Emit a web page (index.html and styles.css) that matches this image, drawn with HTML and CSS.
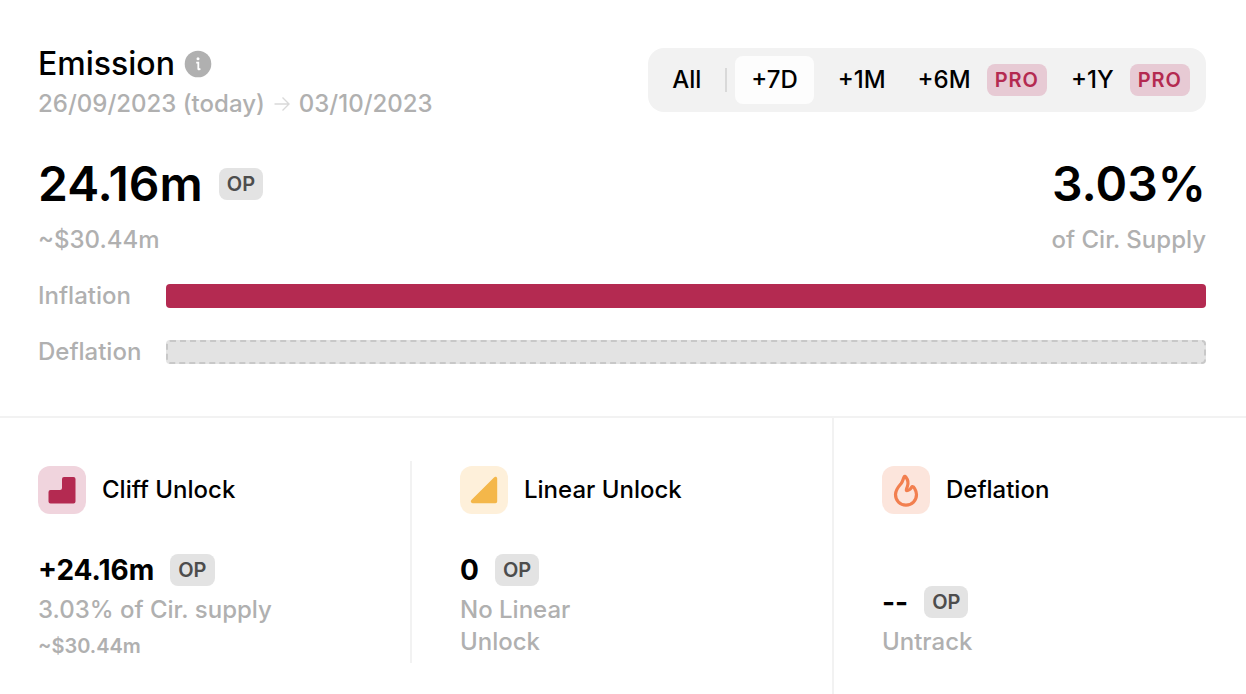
FILE: index.html
```html
<!DOCTYPE html>
<html lang="en">
<head>
    <meta charset="UTF-8">
    <meta name="viewport" content="width=device-width, initial-scale=1.0">
    <title>Emission</title>
    <link rel="stylesheet" href="styles.css">
</head>
<body>
    <section class="emission">
        <header class="emission-header">
            <div>
                <div class="title-row">
                    <h1>Emission</h1>
                    <svg class="info-icon" viewBox="0 0 28 28" aria-hidden="true">
                        <circle cx="14" cy="14" r="13.3" fill="#b0b0b0"/>
                        <circle cx="14" cy="8.8" r="1.5" fill="#fff"/>
                        <path d="M12.2 12.6h2.1v6.200q0 .6 .6 .5l1.500-.3" fill="none" stroke="#fff" stroke-width="1.8"/>
                    </svg>
                </div>
                <div class="dates">
                    <span>26/09/2023 (today)</span>
                    <svg class="arrow" viewBox="0 0 16 16" aria-hidden="true">
                        <path d="M0.5 8h14.5M8.5 1.5L15 8l-6.5 6.5" fill="none" stroke="#d9d9d9" stroke-width="1.4"/>
                    </svg>
                    <span>03/10/2023</span>
                </div>
            </div>
            <nav class="tabs">
                <button type="button">All</button>
                <span class="separator"></span>
                <button type="button" class="active">+7D</button>
                <button type="button">+1M</button>
                <button type="button" class="locked">+6M <span class="badge pro">PRO</span></button>
                <button type="button" class="locked">+1Y <span class="badge pro">PRO</span></button>
            </nav>
        </header>

        <div class="totals">
            <div>
                <div class="total">24.16m <span class="badge">OP</span></div>
                <div class="muted">~$30.44m</div>
            </div>
            <div class="right">
                <div class="total">3.03%</div>
                <div class="muted">of Cir. Supply</div>
            </div>
        </div>

        <div class="bars">
            <span class="muted">Inflation</span>
            <div class="bar inflation"></div>
            <span class="muted">Deflation</span>
            <div class="bar deflation"></div>
        </div>
    </section>

    <section class="unlocks">
        <article class="unlock cliff">
            <div class="unlock-title">
                <svg class="icon" viewBox="0 0 48 48" aria-hidden="true">
                    <rect width="48" height="48" rx="12" fill="#f0d4dd"/>
                    <path d="M26 11h9.500a2 2 0 0 1 2 2v22.500a2 2 0 0 1-2 2h-23a2 2 0 0 1-2-2V26a2 2 0 0 1 2-2H22a2 2 0 0 0 2-2v-9a2 2 0 0 1 2-2z" fill="#b42a51"/>
                </svg>
                <h2>Cliff Unlock</h2>
            </div>
            <div class="stats">
                <div class="amount">+24.16m <span class="badge">OP</span></div>
                <div class="muted">3.03% of Cir. supply</div>
                <div class="usd">~$30.44m</div>
            </div>
        </article>
        <article class="unlock linear">
            <div class="unlock-title">
                <svg class="icon" viewBox="0 0 48 48" aria-hidden="true">
                    <rect width="48" height="48" rx="12" fill="#fef0da"/>
                    <path d="M34 11.400c1.200-1.200 3.200-.5 3.200 1.200v22.800a1.800 1.800 0 0 1-1.800 1.800h-22.800c-1.700 0-2.400-2-1.200-3.200z" fill="#f4b74a"/>
                </svg>
                <h2>Linear Unlock</h2>
            </div>
            <div class="stats">
                <div class="amount">0 <span class="badge">OP</span></div>
                <div class="muted">No Linear<br>Unlock</div>
            </div>
        </article>
        <article class="unlock burn">
            <div class="unlock-title">
                <svg class="icon" viewBox="0 0 48 48" aria-hidden="true">
                    <rect width="48" height="48" rx="12" fill="#fce5dc"/>
                    <path d="M22.300 10.600c.4-.5 1-.3 1.500.3 2.500 3.200 3 5.900 1.500 9.800-.9 2.200-1.300 3.200-.9 3.700.6.700 2.300-.3 3.600-1.200 1.200-.9 1.500-2.300 2.400-2.600 1-.3 1.800 1 2.500 2.400 1.100 2 1.600 3.600 1.600 5.600 0 6.100-4.500 10.600-10.500 10.600S13.500 34.700 13.500 28.600c0-4.800 2.600-7.600 5.500-10.900 2-2.300 2-5.300 3.300-7.100z" fill="none" stroke="#f27f4f" stroke-width="3.200" stroke-linejoin="round"/>
                </svg>
                <h2>Deflation</h2>
            </div>
            <div class="stats">
                <div class="amount">-- <span class="badge">OP</span></div>
                <div class="muted">Untrack</div>
            </div>
        </article>
    </section>
</body>
</html>
```
FILE: styles.css
```css
* {
    box-sizing: border-box;
}
body {
    display: flex;
    flex-direction: column;
    min-height: 100vh;
    margin: 0;
    background: #fff;
    color: #000;
    font-family: Inter, sans-serif;
    font-size: 24px;
    font-weight: 500;
    line-height: 32px;
}
h1, h2 {
    margin: 0;
    font-weight: 500;
}
h1 {
    font-size: 32px;
}
h2 {
    font-size: 24px;
}
.emission {
    padding: 48px 40px 48px 38px;
    border-bottom: 2px solid #f2f2f2;
}
.emission-header {
    display: flex;
    justify-content: space-between;
    align-items: flex-start;
    margin-bottom: 40px;
}
.emission-header > div {
    display: grid;
    gap: 8px;
}
.title-row {
    display: flex;
    align-items: center;
    gap: 9px;
}
.info-icon {
    width: 28px;
    height: 28px;
}
.dates {
    display: flex;
    align-items: center;
    gap: 9px;
    color: #b0b0b0;
}
.arrow {
    width: 16px;
    height: 16px;
}
.muted {
    color: #b0b0b0;
}
.tabs {
    display: flex;
    align-items: center;
    gap: 8px;
    padding: 8px;
    border-radius: 16px;
    background: #f2f2f2;
}
.tabs button {
    display: flex;
    align-items: center;
    gap: 16px;
    height: 48px;
    padding: 0 16px;
    border: none;
    border-radius: 8px;
    background: transparent;
    color: #000;
    font: inherit;
    cursor: pointer;
}
.tabs .active {
    background: #fdfdfd;
}
.tabs .locked {
    padding: 0 8px;
}
.separator {
    width: 2px;
    height: 24px;
    background: #d9d9d9;
}
.badge {
    padding: 0 8px;
    border-radius: 8px;
    background: #e3e3e3;
    color: #4d4d4d;
    font-size: 20px;
    font-weight: 600;
    line-height: 32px;
}
.badge.pro {
    background: #e7cad4;
    color: #b42a51;
    letter-spacing: 1px;
}
.totals {
    display: flex;
    justify-content: space-between;
    margin-bottom: 24px;
}
.totals > div {
    display: grid;
    gap: 16px;
}
.total {
    display: flex;
    align-items: center;
    gap: 16px;
    font-size: 48px;
    font-weight: 600;
    line-height: 48px;
}
.right {
    justify-items: end;
    text-align: right;
}
.bars {
    display: grid;
    grid-template-columns: 104px 1fr;
    align-items: center;
    gap: 24px;
}
.bar {
    height: 24px;
    border-radius: 4px;
}
.inflation {
    background: #b42a51;
}
.deflation {
    border: 2px dashed #c8c8c8;
    background: #e3e3e3;
}
.unlocks {
    display: grid;
    flex: 1;
    grid-template-columns: 412fr 422fr 412fr;
}
.unlock {
    display: flex;
    flex-direction: column;
    gap: 40px;
    padding: 48px;
}
.cliff {
    align-self: start;
    margin-top: 43px;
    padding: 5px 0 5px 38px;
    border-right: 2px solid #f2f2f2;
}
.linear {
    border-right: 2px solid #f2f2f2;
}
.unlock-title {
    display: flex;
    align-items: center;
    gap: 16px;
}
.icon {
    width: 48px;
    height: 48px;
}
.stats {
    display: grid;
    align-content: end;
    gap: 8px;
    min-height: 104px;
}
.amount {
    display: flex;
    align-items: center;
    gap: 16px;
    font-size: 28px;
    font-weight: 700;
}
.usd {
    color: #b0b0b0;
    font-size: 20px;
    font-weight: 600;
    line-height: 24px;
}
```
